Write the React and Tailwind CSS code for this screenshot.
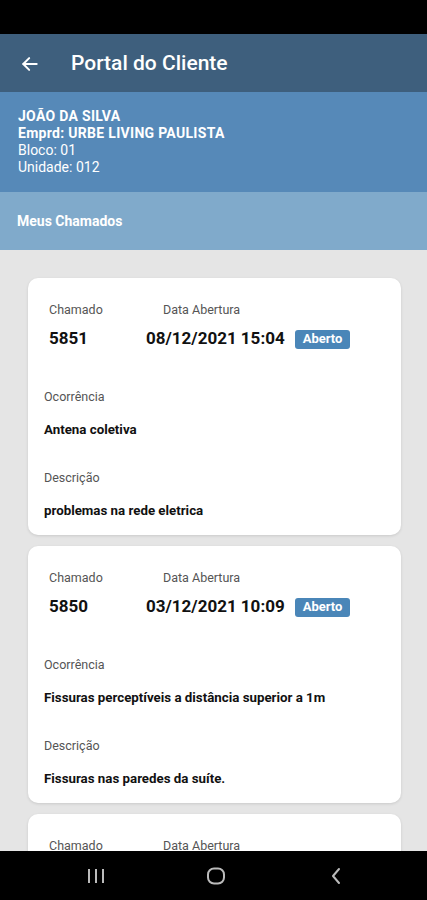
import React from 'react';

const chamados = [
  {
    id: '5851',
    data: '08/12/2021 15:04',
    status: 'Aberto',
    ocorrencia: 'Antena coletiva',
    descricao: 'problemas na rede eletrica',
  },
  {
    id: '5850',
    data: '03/12/2021 10:09',
    status: 'Aberto',
    ocorrencia: 'Fissuras perceptíveis a distância superior a 1m',
    descricao: 'Fissuras nas paredes da suíte.',
  },
  {
    id: '5849',
    data: '01/12/2021 09:12',
    status: 'Aberto',
    ocorrencia: 'Antena coletiva',
    descricao: 'sem sinal',
  },
];

function ChamadoCard({ chamado }) {
  return (
    <div className="bg-white rounded-[10px] shadow-[0_1px_3px_rgba(0,0,0,0.12)] pt-6 pb-[15px] px-4 h-[257px] shrink-0">
      <div className="flex pl-[5px] text-[12.5px] leading-4 text-[#555]">
        <span className="w-[114px]">Chamado</span>
        <span>Data Abertura</span>
      </div>
      <div className="flex items-center pl-[5px] mt-[10px] h-[22px]">
        <span className="w-[97px] text-[17px] font-bold text-[#111]">{chamado.id}</span>
        <span className="text-[17px] font-bold text-[#111]">{chamado.data}</span>
        <span className="ml-[10px] bg-[#4a86b8] text-white text-[13px] font-bold rounded-[3px] h-[19px] px-[8px] flex items-center">
          {chamado.status}
        </span>
      </div>
      <div className="mt-[39px] text-[12.5px] leading-4 text-[#555]">Ocorrência</div>
      <div className="mt-4 text-[13.3px] leading-[18px] font-bold text-[#111]">{chamado.ocorrencia}</div>
      <div className="mt-[31px] text-[12.5px] leading-4 text-[#555]">Descrição</div>
      <div className="mt-4 text-[13.3px] leading-[18px] font-bold text-[#111]">{chamado.descricao}</div>
    </div>
  );
}

export default function App() {
  return (
    <div className="w-[427px] h-[900px] flex flex-col bg-[#e5e5e5] overflow-hidden font-['Roboto',sans-serif]">
      <div className="h-[34px] bg-black shrink-0" />

      <header className="h-[58px] bg-[#3e5f7d] flex items-center pt-[2px] shrink-0">
        <svg className="ml-[20px]" width="20" height="20" viewBox="0 0 24 24" fill="none" stroke="white" strokeWidth="2.4" strokeLinecap="round" strokeLinejoin="round">
          <path d="M20 12H4" />
          <path d="M11 5l-7 7 7 7" />
        </svg>
        <span className="ml-[31px] text-white text-[21px] font-medium">Portal do Cliente</span>
      </header>

      <div className="bg-[#5689b8] px-[18px] pt-[16px] pb-[16px] text-white text-[14px] leading-[17px] shrink-0">
        <div className="font-bold tracking-[0.3px]">JOÃO DA SILVA</div>
        <div className="font-bold tracking-[0.3px]">Emprd: URBE LIVING PAULISTA</div>
        <div>Bloco: 01</div>
        <div>Unidade: 012</div>
      </div>

      <div className="h-[58px] bg-[#80aacb] flex items-center px-[17px] text-white text-[14px] font-bold shrink-0">
        Meus Chamados
      </div>

      <main className="flex-1 overflow-hidden flex flex-col gap-[11px] pt-[28px] pl-[28px] pr-[26px]">
        {chamados.map(c => <ChamadoCard key={c.id} chamado={c} />)}
      </main>

      <nav className="h-[49px] bg-black flex items-center pl-[87px] shrink-0">
        <svg width="18" height="16" viewBox="0 0 18 16" fill="#bbb">
          <rect x="1" y="1" width="2" height="14" />
          <rect x="8" y="1" width="2" height="14" />
          <rect x="15" y="1" width="2" height="14" />
        </svg>
        <svg className="ml-[102px]" width="18" height="18" viewBox="0 0 18 18" fill="none" stroke="#bbb" strokeWidth="2">
          <rect x="1" y="1.5" width="16" height="15" rx="6" />
        </svg>
        <svg className="ml-[105px]" width="12" height="18" viewBox="0 0 12 18" fill="none" stroke="#bbb" strokeWidth="2" strokeLinecap="round" strokeLinejoin="round">
          <path d="M9 2L3 9l6 7" />
        </svg>
      </nav>
    </div>
  );
}
